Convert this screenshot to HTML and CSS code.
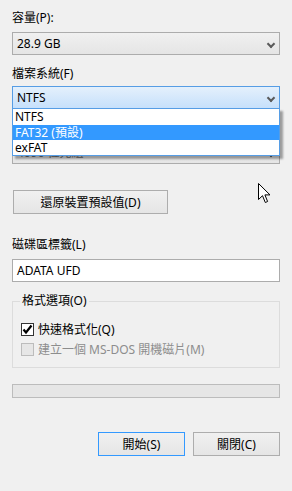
FILE: index.html
```html
<!DOCTYPE html>
<html lang="zh-Hant">
<head>
<meta charset="UTF-8">
<meta name="viewport" content="width=device-width, initial-scale=1.0">
<title>格式化</title>
<link rel="stylesheet" href="styles.css">
</head>
<body>

<div class="dialog">
  <div class="label label-cap">容量(P):</div>
  <div class="combo combo-cap">28.9 GB<span class="arrow"></span></div>

  <div class="label label-fs">檔案系統(F)</div>
  <div class="combo combo-fs open">NTFS<span class="arrow"></span></div>

  <!-- allocation label sits under the open list -->
  <div class="label label-alloc"></div>
  <div class="combo combo-alloc"><span class="alloc-text">4096 位元組</span><span class="arrow"></span></div>

  <button class="btn btn-restore">還原裝置預設值(D)</button>

  <div class="label label-vol">磁碟區標籤(L)</div>
  <div class="textbox">ADATA UFD</div>

  <fieldset class="group">
    <legend>格式選項(O)</legend>
    <div class="check-row">
      <span class="check checked">
        <svg width="11" height="11" viewBox="0 0 11 11"><path d="M1.5 5.5 L4 8.5 L9.5 1.5" fill="none" stroke="#000" stroke-width="2.2"/></svg>
      </span>
      <span>快速格式化(Q)</span>
    </div>
    <div class="check-row disabled">
      <span class="check"></span>
      <span>建立一個 MS-DOS 開機磁片(M)</span>
    </div>
  </fieldset>

  <div class="progress"></div>

  <div class="actions">
    <button class="btn btn-default">開始(S)</button>
    <button class="btn">關閉(C)</button>
  </div>

  <!-- open list of the file system box -->
  <ul class="droplist">
    <li>NTFS</li>
    <li class="selected">FAT32 (預設)</li>
    <li>exFAT</li>
  </ul>

  <svg class="cursor" width="14" height="22" viewBox="0 0 14 22">
    <path d="M0.5 0.5 L0.5 16.5 L4.5 12.7 L7.3 19.5 L9.6 18.5 L6.9 11.9 L12 11.9 Z" fill="#fff" stroke="#000" stroke-width="1"/>
  </svg>
</div>

</body>
</html>
```

FILE: styles.css
```css
/* dialog styles */
body {
  margin: 0;
  background: #f0f0f0;
  font-family: "Noto Sans", "Noto Sans CJK TC", sans-serif;
  font-size: 12px;
  color: #000;
}

.dialog {
  position: relative;
  width: 292px;
  height: 491px;
  padding: 10px 12px 0 12px;
  box-sizing: border-box;
}

.label {
  line-height: 16px;
  height: 16px;
}

.label-fs, .label-alloc {
  margin-top: 11px;
}

.label-vol {
  margin-top: 23px;
}

.combo {
  position: relative;
  height: 23px;
  line-height: 21px;
  padding-left: 4px;
  border: 1px solid #acacac;
  box-sizing: border-box;
  background: linear-gradient(#f0f0f0, #e5e5e5);
}

.combo-cap {
  margin-top: 6px;
}

.combo-fs {
  margin-top: 4px;
}

.combo-alloc {
  margin-top: 5px;
  color: #6d6d6d;
  overflow: hidden;
}

.alloc-text {
  display: block;
  line-height: 21px;
}

.combo.open {
  border-color: #569de5;
  background: linear-gradient(#e4f0fc, #c6e0fb);
}

.arrow {
  position: absolute;
  right: 5px;
  top: 8px;
  width: 4px;
  height: 4px;
  border-right: 2px solid #5a5a5a;
  border-bottom: 2px solid #5a5a5a;
  transform: rotate(45deg);
}

.btn {
  display: block;
  height: 24px;
  padding: 0;
  border: 1px solid #adadad;
  background: linear-gradient(#f0f0f0, #e5e5e5);
  font-family: inherit;
  font-size: 12px;
  color: #000;
}

.btn-restore {
  width: 155px;
  margin: 26px 0 0 1px;
}

.textbox {
  height: 23px;
  margin-top: 6px;
  line-height: 21px;
  padding-left: 4px;
  border: 1px solid #acacac;
  box-sizing: border-box;
  background: #fff;
}

.group {
  margin: 11px 0 0 0;
  padding: 12px 8px 10px 8px;
  border: 1px solid #dcdcdc;
  min-width: 0;
}

.group legend {
  padding: 0 2px;
  margin-left: -1px;
  line-height: 16px;
}

.check-row {
  display: flex;
  align-items: center;
  gap: 4px;
  height: 16px;
}

.check-row + .check-row {
  margin-top: 4px;
}

.check {
  display: flex;
  align-items: center;
  justify-content: center;
  width: 13px;
  height: 13px;
  box-sizing: border-box;
  border: 1px solid #333;
  background: #fff;
}

.disabled {
  color: #8d8d8d;
}

.disabled .check {
  border-color: #bcbcbc;
  background: #e6e6e6;
}

.progress {
  height: 14px;
  margin-top: 16px;
  border: 1px solid #bcbcbc;
  box-sizing: border-box;
  background: #e6e6e6;
}

.actions {
  display: flex;
  justify-content: flex-end;
  gap: 8px;
  margin-top: 34px;
}

.actions .btn {
  width: 87px;
}

.btn-default {
  border-color: #3399ff;
}

.droplist {
  position: absolute;
  left: 12px;
  top: 108px;
  width: 268px;
  margin: 0;
  padding: 0;
  list-style: none;
  background: #fff;
  border: 1px solid #569de5;
  box-sizing: border-box;
  box-shadow: 3px 3px 2px rgba(0, 0, 0, 0.35);
}

.droplist li {
  height: 15px;
  line-height: 15px;
  padding-left: 2px;
}

.droplist li:first-child {
  height: 16px;
  line-height: 16px;
}

.droplist .selected {
  background: #3399ff;
  color: #fff;
}

.cursor {
  position: absolute;
  left: 258px;
  top: 183px;
}
```
